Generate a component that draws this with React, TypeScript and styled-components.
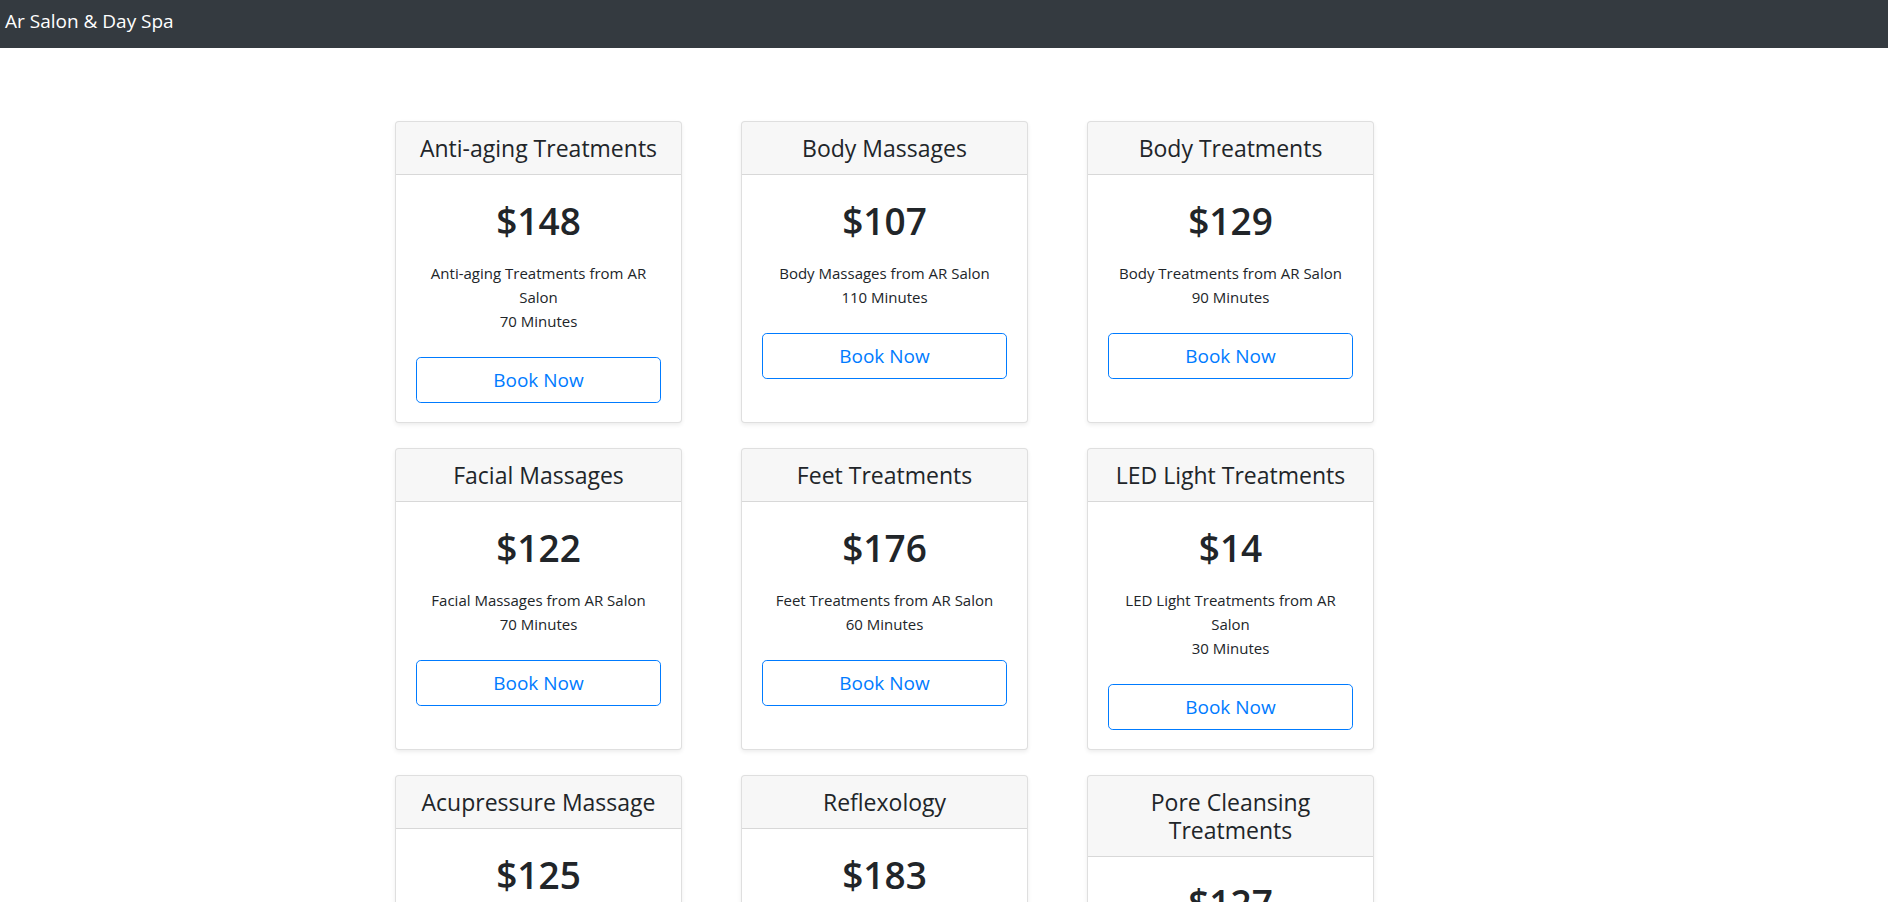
import React from "react";
import styled, { createGlobalStyle } from "styled-components";

const GlobalStyle = createGlobalStyle`
  html, body { margin: 0; padding: 0; background: #fff; }
  body {
    font-family: "Open Sans", "Noto Sans", "Liberation Sans", sans-serif;
    color: #212529;
    font-size: 15px;
    line-height: 1.5;
  }
  * { box-sizing: border-box; }
`;

const Navbar = styled.nav`
  background: #343a40;
  height: 48px;
  padding: 6px 5px 12px;
`;

const Brand = styled.a`
  color: #fff;
  font-size: 19px;
  line-height: 30px;
  text-decoration: none;
  white-space: nowrap;
`;

const Main = styled.main`
  padding-top: 73px;
`;

const Container = styled.div`
  width: 1140px;
  margin: 0 auto;
  padding-left: 21px;
`;

const Deck = styled.div`
  display: grid;
  grid-template-columns: repeat(3, 287px);
  column-gap: 59px;
  row-gap: 25px;
  align-items: stretch;
  text-align: center;
`;

const Card = styled.div`
  display: flex;
  flex-direction: column;
  background: #fff;
  border: 1px solid rgba(0, 0, 0, 0.125);
  border-radius: 4px;
  box-shadow: 0 2px 4px rgba(0, 0, 0, 0.075);
`;

const CardHeader = styled.div`
  background: rgba(0, 0, 0, 0.03);
  border-bottom: 1px solid rgba(0, 0, 0, 0.125);
  border-radius: 3px 3px 0 0;
  padding: 12px 20px;
`;

const Title = styled.h4`
  margin: 0;
  font-size: 23px;
  font-weight: 400;
  line-height: 28px;
`;

const CardBody = styled.div`
  padding: 22px 20px 19px;
`;

const Price = styled.h1`
  margin: 0 0 16px;
  font-size: 37px;
  font-weight: 600;
  line-height: 48px;
`;

const Details = styled.ul`
  list-style: none;
  margin: 0 0 24px;
  padding: 0;
  line-height: 24px;
  color: #212529;
`;

const BookButton = styled.button`
  display: block;
  width: 100%;
  height: 46px;
  padding: 0 16px;
  font-family: inherit;
  font-size: 19px;
  line-height: 29px;
  color: #007bff;
  background: transparent;
  border: 1px solid #007bff;
  border-radius: 4.8px;
  cursor: pointer;
`;

type Service = { name: string; price: number; minutes: number };

const services: Service[] = [
  { name: "Anti-aging Treatments", price: 148, minutes: 70 },
  { name: "Body Massages", price: 107, minutes: 110 },
  { name: "Body Treatments", price: 129, minutes: 90 },
  { name: "Facial Massages", price: 122, minutes: 70 },
  { name: "Feet Treatments", price: 176, minutes: 60 },
  { name: "LED Light Treatments", price: 14, minutes: 30 },
  { name: "Acupressure Massage", price: 125, minutes: 60 },
  { name: "Reflexology", price: 183, minutes: 45 },
  { name: "Pore Cleansing Treatments", price: 127, minutes: 50 },
];

export default function App() {
  return (
    <>
      <GlobalStyle />
      <Navbar>
        <Brand href="#">Ar Salon &amp; Day Spa</Brand>
      </Navbar>
      <Main>
        <Container>
          <Deck>
            {services.map((s) => (
              <Card key={s.name}>
                <CardHeader>
                  <Title>{s.name}</Title>
                </CardHeader>
                <CardBody>
                  <Price>${s.price}</Price>
                  <Details>
                    <li>{s.name} from AR Salon</li>
                    <li>{s.minutes} Minutes</li>
                  </Details>
                  <BookButton type="button">Book Now</BookButton>
                </CardBody>
              </Card>
            ))}
          </Deck>
        </Container>
      </Main>
    </>
  );
}
